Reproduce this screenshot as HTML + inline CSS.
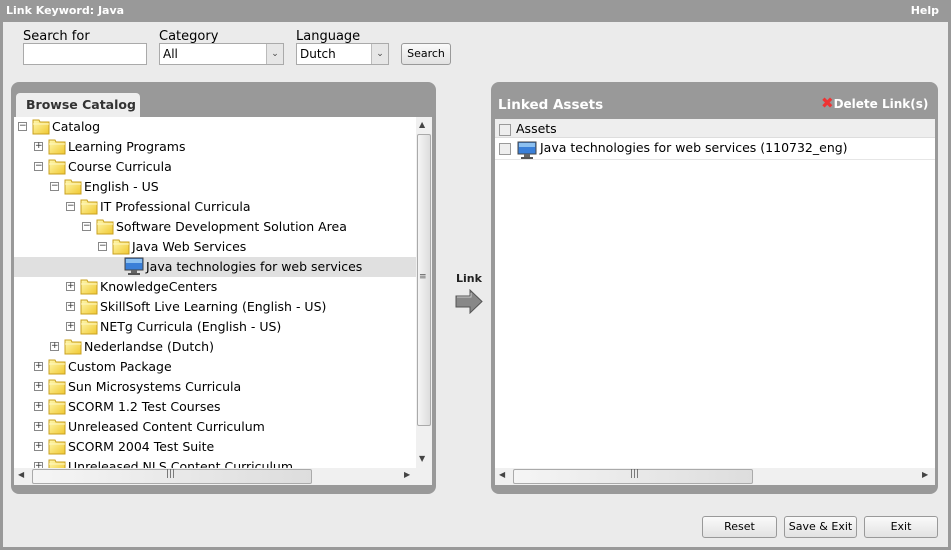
<!DOCTYPE html><html><head><style>
*{margin:0;padding:0;box-sizing:border-box}
body{width:951px;height:550px;background:#ebebeb;font-family:"DejaVu Sans","Liberation Sans",sans-serif;font-size:12px;color:#000;position:relative;overflow:hidden}
.a{position:absolute}
.top{left:0;top:0;width:951px;height:22px;background:#999;color:#fff;font-weight:bold;font-size:11px;line-height:22px;padding-left:6px}
.frame{left:0;top:22px;width:3px;height:528px;background:#999}
.frameR{right:0;top:22px;width:3px;height:528px;background:#999}
.frameB{left:0;bottom:0;width:951px;height:3px;background:#999}
.lbl{font-size:13px}
.inp{background:#fff;border:1px solid #aaa;height:22px}
.sel{background:#fff;border:1px solid #aaa;height:22px;line-height:20px;padding-left:3px}
.sel i{position:absolute;right:0;top:0;width:17px;height:20px;background:#e6e6e6;border-left:1px solid #bbb;font-style:normal;font-size:9px;text-align:center;color:#444}
.btn{background:linear-gradient(#fafafa,#e2e2e2);border:1px solid #999;border-radius:3px;font-size:11px;text-align:center;line-height:20px}
.panel{background:#999;border-radius:8px}
.row{position:absolute;left:0;height:20px;line-height:20px;white-space:nowrap;font-size:12.5px}
.ex{display:inline-block;width:9px;height:9px;border:1px solid #888;background:#fff;font-size:9px;line-height:7px;text-align:center;vertical-align:middle;margin-right:5px;position:relative;top:-1px;color:#333}
.fd{display:inline-block;width:18px;height:18px;vertical-align:middle;margin-right:2px;position:relative;top:-2px}
.sb{background:#f0f0f0}
.thumb{background:linear-gradient(90deg,#f5f5f5,#ddd);border:1px solid #aaa;border-radius:2px}
</style></head><body>
<div class="a top">Link Keyword: Java<span style="position:absolute;right:12px">Help</span></div>
<div class="a frame"></div><div class="a frameR"></div><div class="a frameB"></div>

<div class="a lbl" style="left:23px;top:29px">Search for</div>
<div class="a inp" style="left:23px;top:43px;width:124px"></div>
<div class="a lbl" style="left:159px;top:29px">Category</div>
<div class="a sel" style="left:159px;top:43px;width:125px">All<i>⌄</i></div>
<div class="a lbl" style="left:296px;top:29px">Language</div>
<div class="a sel" style="left:296px;top:43px;width:93px">Dutch<i>⌄</i></div>
<div class="a btn" style="left:401px;top:43px;width:50px;height:22px">Search</div>

<svg width="0" height="0" style="position:absolute"><defs>
<linearGradient id="fg" x1="0" y1="0" x2="1" y2="1"><stop offset="0" stop-color="#fff8b0"/><stop offset="1" stop-color="#f0c830"/></linearGradient></defs></svg>

<div class="a panel" style="left:11px;top:82px;width:425px;height:412px"></div>
<div class="a" style="left:16px;top:93px;width:124px;height:25px;background:#eee;border-radius:4px 4px 0 0;font-weight:bold;font-size:12.5px;color:#333;line-height:23px;padding-left:10px">Browse Catalog</div>
<div class="a" style="left:14px;top:117px;width:418px;height:368px;background:#fff;overflow:hidden" id="tree">
<div class="a" style="left:0;top:140px;width:402px;height:20px;background:#e0e0e0"></div>
</div>
<div class="a sb" style="left:416px;top:117px;width:16px;height:351px"></div>
<div class="a" style="left:419px;top:120px;font-size:8px;color:#444">▲</div>
<div class="a thumb" style="left:417px;top:134px;width:14px;height:292px"></div>
<div class="a" style="left:419px;top:272px;font-size:9px;color:#555">≡</div>
<div class="a" style="left:419px;top:454px;font-size:8px;color:#444">▼</div>
<div class="a sb" style="left:14px;top:468px;width:418px;height:17px"></div>
<div class="a" style="left:18px;top:470px;font-size:8px;color:#444">◀</div>
<div class="a thumb" style="left:32px;top:469px;width:280px;height:15px"></div>
<div class="a" style="left:166px;top:469px;font-size:9px;color:#555">|||</div>
<div class="a" style="left:404px;top:470px;font-size:8px;color:#444">▶</div>

<div class="a" style="left:456px;top:272px;font-weight:bold;font-size:11px;color:#222">Link</div>
<svg class="a" style="left:455px;top:289px" width="28" height="25"><path d="M1 7h14V1l12 11.5L15 24v-6H1z" fill="#888" stroke="#555"/><path d="M2 8h14V4" stroke="#ccc" fill="none"/></svg>

<div class="a panel" style="left:491px;top:82px;width:447px;height:412px"></div>
<div class="a" style="left:498px;top:97px;color:#fff;font-weight:bold;font-size:13.5px">Linked Assets</div>
<div class="a" style="left:821px;top:97px;color:#fff;font-weight:bold;font-size:12px"><span style="color:#e33;font-size:15px;line-height:10px">✖</span>Delete Link(s)</div>
<div class="a" style="left:495px;top:119px;width:440px;height:349px;background:#fff"></div>
<div class="a" style="left:495px;top:119px;width:440px;height:19px;background:#eee;border-bottom:1px solid #ddd"></div>
<div class="a" style="left:499px;top:124px;width:12px;height:12px;border:1px solid #999;background:#eee"></div>
<div class="a" style="left:516px;top:121px;font-size:12.5px">Assets</div>
<div class="a" style="left:495px;top:138px;width:440px;height:22px;border-bottom:1px solid #e6e6e6"></div>
<div class="a" style="left:499px;top:143px;width:12px;height:12px;border:1px solid #999;background:#eee"></div>
<svg class="a" style="left:517px;top:141px" width="20" height="19"><rect x="1" y="1" width="18" height="12" fill="#3a7fd8" stroke="#444"/><rect x="2" y="2" width="16" height="4" fill="#8cc0f0"/><rect x="7" y="13" width="6" height="3" fill="#666"/><rect x="4" y="16" width="12" height="2" fill="#555"/></svg>
<div class="a" style="left:540px;top:140px;font-size:12.5px">Java technologies for web services (110732_eng)</div>
<div class="a sb" style="left:495px;top:468px;width:440px;height:17px"></div>
<div class="a" style="left:499px;top:470px;font-size:8px;color:#444">◀</div>
<div class="a thumb" style="left:513px;top:469px;width:240px;height:15px"></div>
<div class="a" style="left:630px;top:469px;font-size:9px;color:#555">|||</div>
<div class="a" style="left:922px;top:470px;font-size:8px;color:#444">▶</div>

<div class="a btn" style="left:702px;top:516px;width:75px;height:22px">Reset</div>
<div class="a btn" style="left:784px;top:516px;width:73px;height:22px">Save &amp; Exit</div>
<div class="a btn" style="left:864px;top:516px;width:74px;height:22px">Exit</div>

<script>
var rows=[[0,'m','Catalog'],[1,'p','Learning Programs'],[1,'m','Course Curricula'],[2,'m','English - US'],[3,'m','IT Professional Curricula'],[4,'m','Software Development Solution Area'],[5,'m','Java Web Services'],[6,'c','Java technologies for web services'],[3,'p','KnowledgeCenters'],[3,'p','SkillSoft Live Learning (English - US)'],[3,'p','NETg Curricula (English - US)'],[2,'p','Nederlandse (Dutch)'],[1,'p','Custom Package'],[1,'p','Sun Microsystems Curricula'],[1,'p','SCORM 1.2 Test Courses'],[1,'p','Unreleased Content Curriculum'],[1,'p','SCORM 2004 Test Suite'],[1,'p','Unreleased NLS Content Curriculum']];
var fold='<svg class="fd" viewBox="0 0 18 18"><path d="M1 3h6l1 2h9v12H1z" fill="url(#fg)" stroke="#c8a020"/><path d="M1 7h16" stroke="#fff7c0"/></svg>';
var comp='<svg class="fd" style="width:20px;height:18px;margin-right:2px" viewBox="0 0 20 18"><rect x="1" y="1" width="18" height="12" fill="#3a7fd8" stroke="#444"/><rect x="2" y="2" width="16" height="4" fill="#8cc0f0"/><rect x="7" y="13" width="6" height="3" fill="#666"/><rect x="4" y="16" width="12" height="2" fill="#555"/></svg>';
var h='';rows.forEach(function(r,i){var x=4+r[0]*16;var pre=r[1]=='c'?comp:'<span class="ex">'+(r[1]=='m'?'−':'+')+'</span>'+fold;if(r[1]=='c')x+=10;h+='<div class="row" style="top:'+(i*20)+'px;left:'+x+'px">'+pre+r[2]+'</div>';});
document.getElementById('tree').insertAdjacentHTML('beforeend',h);
</script>
</body></html>
